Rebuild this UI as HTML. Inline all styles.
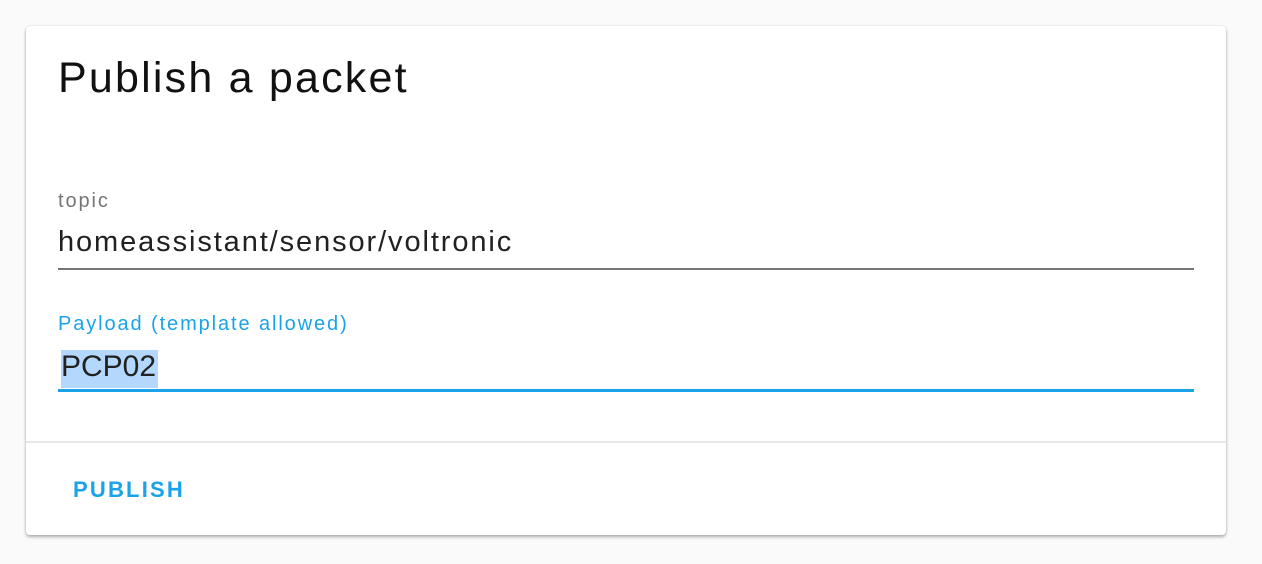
<!DOCTYPE html>
<html><head><style>
body{margin:0;background:#fafafa;width:1262px;height:564px;font-family:"Liberation Sans",Roboto,sans-serif;position:relative;overflow:hidden}
.card{position:absolute;left:26px;top:26px;width:1200px;height:509px;background:#fff;border-radius:4px;box-shadow:0 2px 3px rgba(0,0,0,.3),0 0 2px rgba(0,0,0,.1)}
.t{position:absolute;white-space:nowrap}
</style></head><body>
<div class="card">
<div class="t" style="left:32px;top:28px;font-size:43px;color:#111;letter-spacing:2.2px">Publish a packet</div>
<div class="t" style="left:32px;top:164px;font-size:20px;color:#757575;letter-spacing:1.9px">topic</div>
<div class="t" style="left:32px;top:200px;font-size:29px;color:#212121;letter-spacing:1.9px">homeassistant/sensor/voltronic</div>
<div style="position:absolute;left:32px;top:242px;width:1136px;height:2px;background:#757575"></div>
<div class="t" style="left:32px;top:287px;font-size:20px;color:#1aa3e8;letter-spacing:1.9px">Payload (template allowed)</div>
<div style="position:absolute;left:35px;top:324px;width:97px;height:38px;background:#b3d7fd"></div>
<div class="t" style="left:35px;top:324px;font-size:30px;color:#212121">PCP02</div>
<div style="position:absolute;left:32px;top:363px;width:1136px;height:3px;background:#1aa3e8"></div>
<div style="position:absolute;left:0;top:415px;width:1200px;height:2px;background:#e6e6e6"></div>
<div class="t" style="left:47px;top:451px;font-size:22px;color:#1aa3e8;font-weight:600;letter-spacing:2.2px">PUBLISH</div>
</div>
</body></html>
